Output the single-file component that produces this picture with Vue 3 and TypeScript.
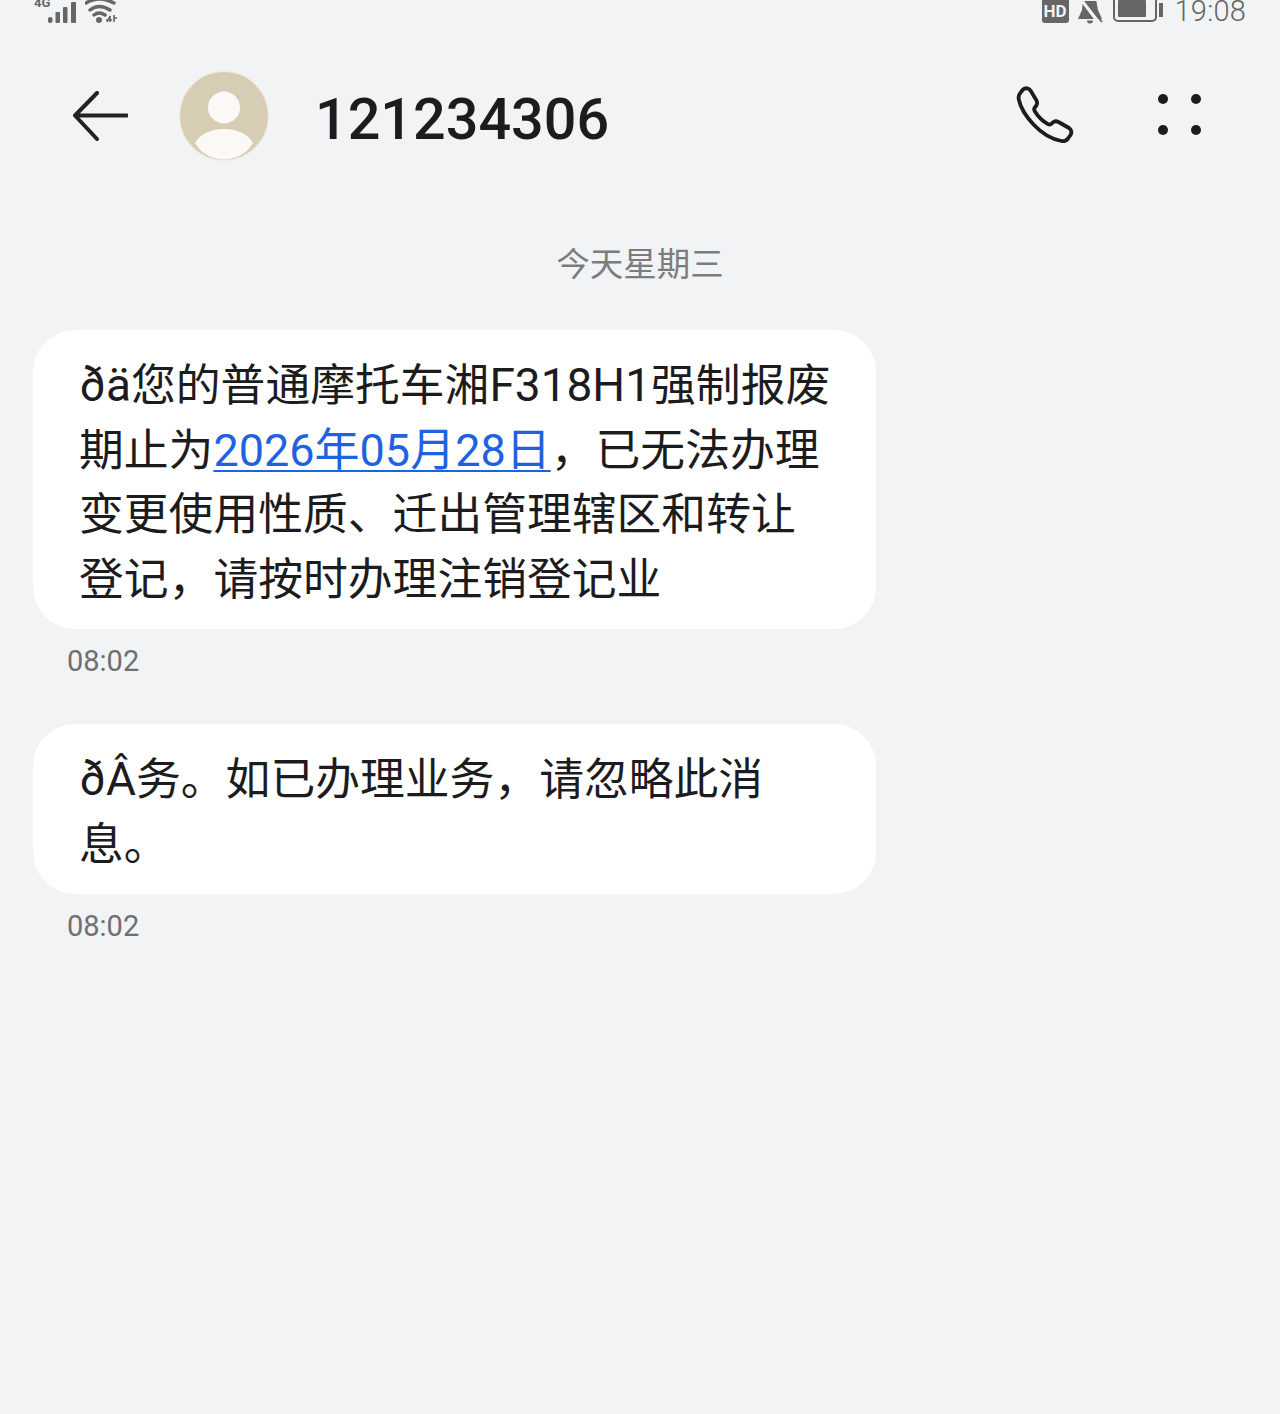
<template>
  <div class="screen">
    <div class="status">
      <div class="status__left">
        <span class="net">4G</span>
        <svg class="signal" width="30" height="22" viewBox="0 0 30 22" aria-hidden="true">
          <rect x="0" y="15" width="4.500" height="6" rx="2" />
          <rect x="7.500" y="10" width="4.500" height="11" rx="1" />
          <rect x="15" y="5" width="4.500" height="16" rx="1" />
          <rect x="23" y="0" width="5" height="21" rx="1" />
        </svg>
        <svg class="wifi" width="34" height="24" viewBox="0 0 34 24" aria-hidden="true">
          <path d="M1 3Q14 -5 29 3M5 10Q14 3 25 10M9 15Q14 11 20 15" fill="none" stroke="#666" stroke-width="3.400" stroke-linecap="round" />
          <circle cx="14" cy="20" r="3" fill="#666" />
          <path d="M22 22l3-6v6M21 20h6M29 15v7M29 18h3" fill="none" stroke="#666" stroke-width="1.600" />
        </svg>
      </div>
      <div class="status__right">
        <span class="hd">HD</span>
        <svg class="bell" width="26" height="24" viewBox="0 0 26 24" aria-hidden="true">
          <path d="M6 -2H19L21 9L25 18H1L5 9Z" fill="#666" />
          <path d="M10 19.500h6a3 3 0 0 1-6 0Z" fill="#666" />
          <path d="M4 -2L22 22" stroke="#f2f3f5" stroke-width="3.500" />
          <path d="M6 -3L25 21" stroke="#666" stroke-width="2" />
        </svg>
        <span class="battery"><span class="battery__fill"></span></span>
        <span class="battery__cap"></span>
        <span class="clock">19:08</span>
      </div>
    </div>

    <header class="toolbar">
      <svg class="back" width="56" height="50" viewBox="0 0 56 50" aria-hidden="true">
        <path d="M25 2L3 24.500L25 48M3 24.500H55" fill="none" stroke="#222" stroke-width="4" stroke-linecap="round" stroke-linejoin="round" />
      </svg>
      <div class="avatar">
        <svg width="90" height="90" viewBox="0 0 90 90" aria-hidden="true">
          <circle cx="45" cy="45" r="45" fill="#f0ebdd" />
          <circle cx="45" cy="45" r="44" fill="#d7cdb4" />
          <circle cx="45" cy="36.500" r="16" fill="#fbf9f5" />
          <path d="M16 72C22 62 33 58 45 58C57 58 68 62 74 72C67 84 55 88.500 45 88.500C35 88.500 23 84 16 72Z" fill="#fbf9f5" />
        </svg>
      </div>
      <h1 class="title">121234306</h1>
      <svg class="phone" width="58" height="58" viewBox="0 0 58 58" aria-hidden="true">
        <path d="M7 3.500C9.500 1.500 13 2 14.500 4.500L20.500 14.500C21.500 16.500 21.500 18 20 20L18.500 22C18 23 18 24 18.800 25.200C22 30.500 26.500 35 32 38.200C33 38.800 34 38.800 35 38L37.500 36C39 35 40.500 35 42.500 36L53 42C55.500 43.500 56 46.500 54.500 49L52 52.500C50.500 54.500 48 55.500 45.500 55C37 53.500 26 47.500 17.500 38.500C10 30.500 4.500 21.500 2.800 13.500C2.200 10.500 3 8 5 6Z" fill="none" stroke="#1c1c1e" stroke-width="3.800" stroke-linejoin="round" />
      </svg>
      <div class="more" aria-hidden="true">
        <span></span><span></span><span></span><span></span>
      </div>
    </header>

    <div class="day">今天星期三</div>

    <section class="msg">
      <div class="bubble"><span class="lat">ðä</span>您的普通摩托车湘<span class="lat">F318H1</span>强制报废<br>期止为<a class="link">2026年05月28日</a>，已无法办理<br>变更使用性质、迁出管理辖区和转让<br>登记，请按时办理注销登记业</div>
      <div class="time">08:02</div>
    </section>

    <section class="msg msg--next">
      <div class="bubble"><span class="lat">ðÂ</span>务。如已办理业务，请忽略此消<br>息。</div>
      <div class="time">08:02</div>
    </section>
  </div>
</template>

<script setup lang="ts">
</script>

<style>
html,
body {
  margin: 0;
  background: #f2f3f5;
}
</style>

<style scoped>
.screen {
  height: 1414px;
  overflow: hidden;
  background: #f2f3f5;
  font-family: Roboto, "Noto Sans CJK SC", sans-serif;
  color: #1c1c1e;
}

/* status bar, clipped at the top like the capture */
.status {
  height: 24px;
  padding: 0 34px;
  display: flex;
  justify-content: space-between;
  align-items: flex-end;
  overflow: hidden;
  color: #666;
}

.status__left,
.status__right {
  display: flex;
  align-items: flex-end;
}

.net {
  font-size: 13px;
  font-weight: 700;
  line-height: 13px;
  align-self: flex-start;
  margin-top: -4px;
  width: 14px;
  white-space: nowrap;
}

.signal {
  fill: #666;
  flex: none;
}

.wifi {
  margin-left: 7px;
  flex: none;
}

.hd {
  width: 27px;
  height: 26px;
  margin-bottom: 1px;
  margin-left: 1px;
  border-radius: 3px;
  background: #666;
  color: #f2f3f5;
  font-size: 17px;
  font-weight: 700;
  line-height: 29px;
  text-align: center;
}

.bell {
  margin: 0 0 -1px 8px;
  flex: none;
}

.battery {
  box-sizing: border-box;
  width: 44px;
  height: 26px;
  margin-left: 10px;
  margin-bottom: 2px;
  padding: 3px;
  border: 2px solid #666;
  border-top: 0;
  border-radius: 5px;
  display: flex;
  align-items: flex-end;
}

.battery__fill {
  width: 28px;
  height: 17px;
  background: #666;
  border-radius: 1px;
}

.battery__cap {
  width: 4px;
  height: 14px;
  margin: 0 0 7px 2px;
  background: #666;
}

.clock {
  margin-left: 12px;
  font-size: 29px;
  font-weight: 300;
  line-height: 27px;
  margin-bottom: -1px;
  letter-spacing: 0.2px;
}

.toolbar {
  height: 92px;
  margin-top: 46px;
  padding-left: 72px;
  display: flex;
  align-items: center;
}

.back {
  flex: none;
}

.avatar {
  width: 90px;
  height: 90px;
  margin-left: 51px;
  flex: none;
  font-size: 0;
}

.title {
  margin: 0 0 0 46px;
  padding-top: 8px;
  font-size: 57.500px;
  font-weight: 500;
  line-height: 84px;
  flex: 1;
}

.phone {
  flex: none;
  margin-top: -3px;
}

.more {
  width: 43px;
  margin: -3px 79px 0 84px;
  display: grid;
  grid-template-columns: 10px 10px;
  justify-content: space-between;
  row-gap: 21px;
}

.more span {
  height: 10px;
  border-radius: 50%;
  background: #1c1c1e;
}

.day {
  margin-top: 80px;
  text-align: center;
  font-size: 33.500px;
  line-height: 46px;
  color: #7c7c7f;
}

.msg {
  margin: 42px 0 0 33px;
}

.msg--next {
  margin-top: 45px;
}

.bubble {
  box-sizing: border-box;
  width: 843px;
  padding: 23px 20px 17px 46px;
  border-radius: 42px;
  background: #fff;
  font-size: 44.800px;
  line-height: 64.500px;
  white-space: nowrap;
  color: #1c1c1e;
}

.lat {
  font-size: 46px;
}

.link {
  font-size: 45px;
  color: #1f62e0;
  text-decoration: underline;
  text-decoration-thickness: 2px;
  text-underline-offset: 4px;
}

.time {
  margin: 15px 0 0 34px;
  font-size: 29px;
  line-height: 35px;
  color: #6f6f72;
}
</style>
